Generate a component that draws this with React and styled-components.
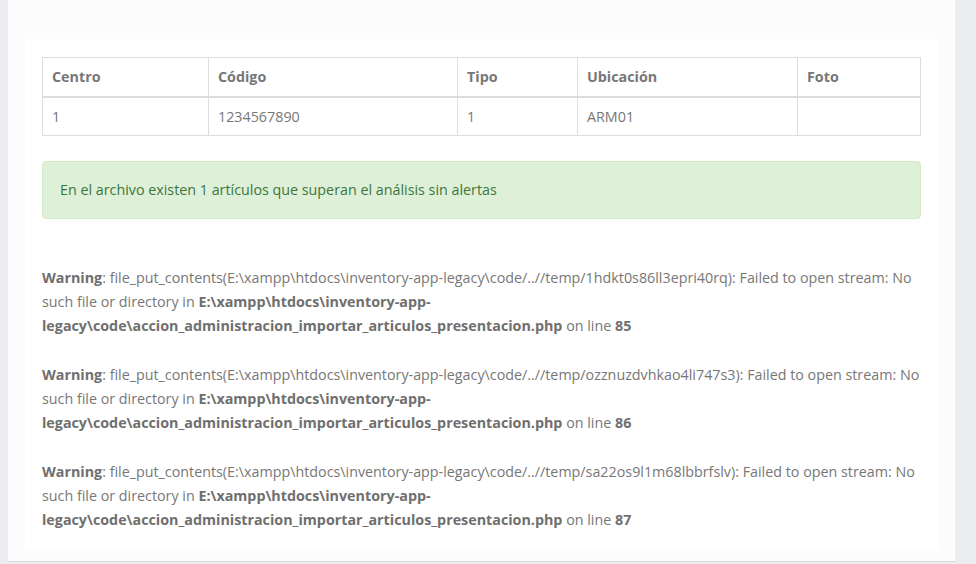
import styled, { createGlobalStyle } from "styled-components";

const Global = createGlobalStyle`
  html, body {
    margin: 0;
    padding: 0;
    background: #ecedf1;
    font-family: "Open Sans", "Liberation Sans", sans-serif;
    font-size: 14.3px;
    color: #777;
  }
`;

const Page = styled.div`
  padding-left: 8px;
  width: 947px;
`;

const Card = styled.div`
  background: #fcfcfc;
  padding: 39px 16px 11px 17px;
  border-bottom: 1px solid #d9d9d9;
`;

const Panel = styled.div`
  background: #fff;
  padding: 18px 18px 18px 17px;
`;

const Table = styled.table`
  width: 100%;
  table-layout: fixed;
  border-collapse: collapse;
  border: 1px solid #ddd;
  margin-bottom: 25px;
`;

const Th = styled.th`
  text-align: left;
  font-weight: 700;
  color: #777;
  padding: 8px 10px 8px 9px;
  line-height: 22px;
  border: 1px solid #ddd;
  border-bottom: 2px solid #ddd;
  width: ${(p) => (p.w ? `${p.w}px` : "auto")};
`;

const Td = styled.td`
  padding: 8px 10px 8px 9px;
  line-height: 21px;
  border: 1px solid #ddd;
  color: #777;
`;

const Alert = styled.div`
  background: #dff0d8;
  border: 1px solid #d6e9c6;
  border-radius: 4px;
  color: #3c763d;
  padding: 17px 17px;
  line-height: 22px;
`;

const WarningList = styled.div`
  display: flex;
  flex-direction: column;
  gap: 25px;
  margin-top: 47px;
`;

const Warning = styled.div`
  line-height: 24px;
  color: #777;
  b {
    font-weight: 700;
    color: #6f6f6f;
  }
`;

const warnings = [
  { file: "1hdkt0s86ll3epri40rq", line: 85 },
  { file: "ozznuzdvhkao4li747s3", line: 86 },
  { file: "sa22os9l1m68lbbrfslv", line: 87 },
];

export default function App() {
  return (
    <>
      <Global />
      <Page>
        <Card>
          <Panel>
            <Table>
              <thead>
                <tr>
                  <Th w={146}>Centro</Th>
                  <Th w={229}>Código</Th>
                  <Th w={100}>Tipo</Th>
                  <Th w={200}>Ubicación</Th>
                  <Th>Foto</Th>
                </tr>
              </thead>
              <tbody>
                <tr>
                  <Td>1</Td>
                  <Td>1234567890</Td>
                  <Td>1</Td>
                  <Td>ARM01</Td>
                  <Td></Td>
                </tr>
              </tbody>
            </Table>
            <Alert>
              En el archivo existen 1 artículos que superan el análisis sin alertas
            </Alert>
            <WarningList>
              {warnings.map((w) => (
                <Warning key={w.line}>
                  <b>Warning</b>: file_put_contents(E:\xampp\htdocs\inventory-app-legacy\code/..//temp/
                  {w.file}): Failed to open stream: No such file or directory in{" "}
                  <b>E:\xampp\htdocs\inventory-app-legacy\code\accion_administracion_importar_articulos_presentacion.php</b>{" "}
                  on line <b>{w.line}</b>
                </Warning>
              ))}
            </WarningList>
          </Panel>
        </Card>
      </Page>
    </>
  );
}
